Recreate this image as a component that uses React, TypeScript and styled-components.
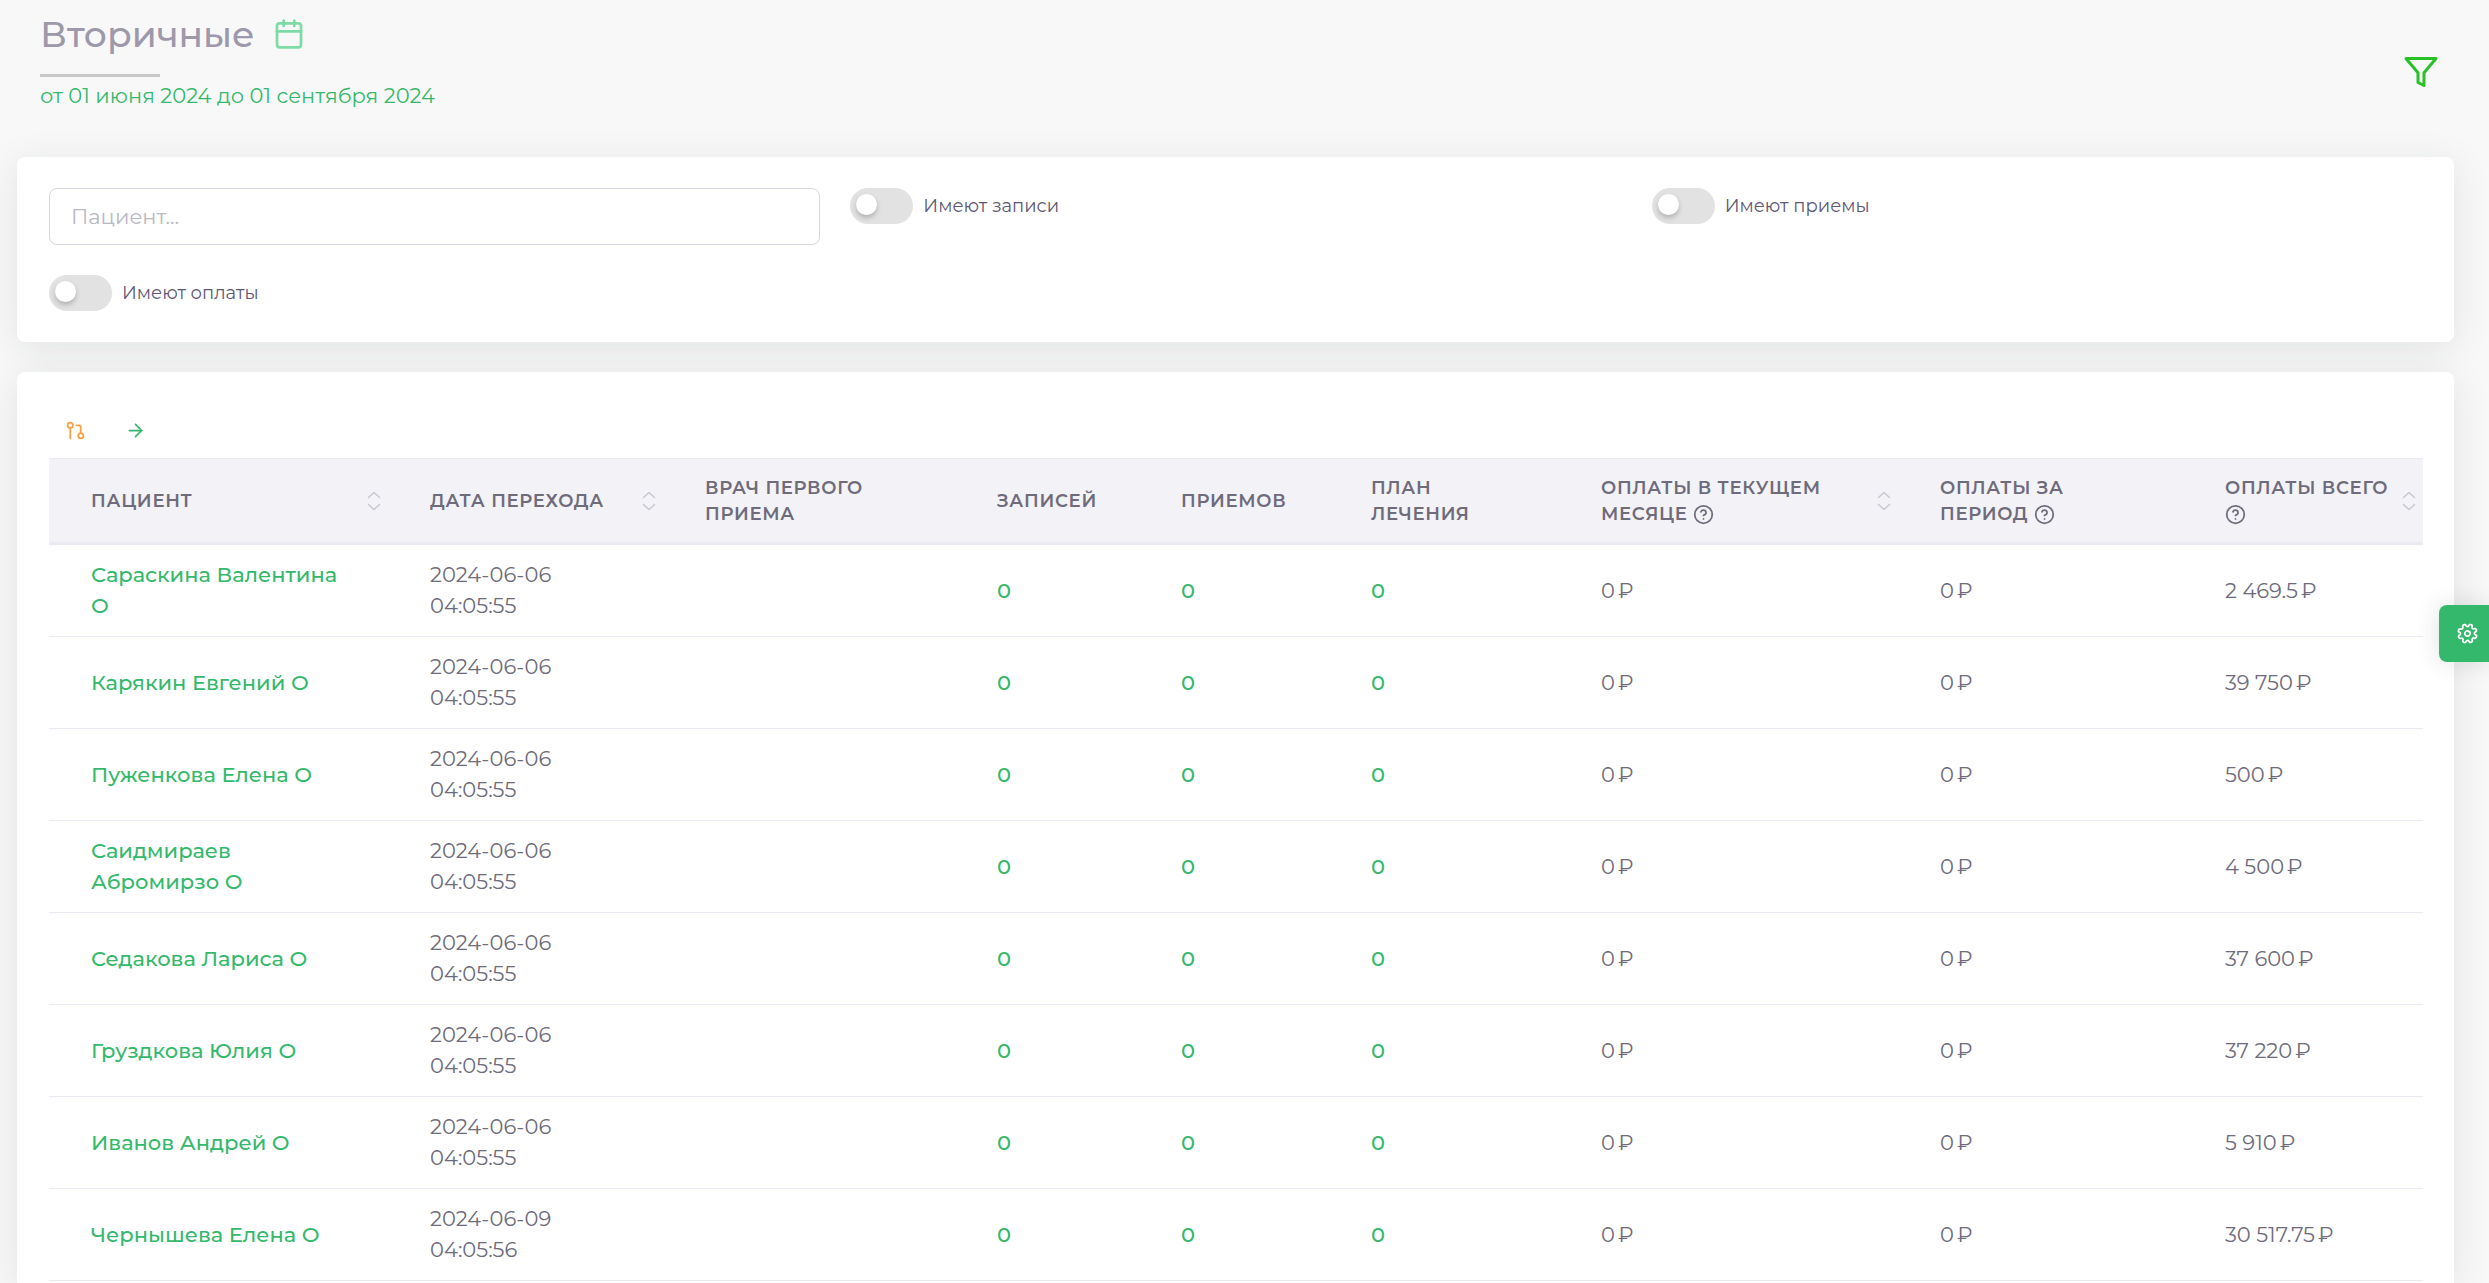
import React from "react";
import styled, { createGlobalStyle } from "styled-components";
import {
  FiArrowRight,
  FiCalendar,
  FiFilter,
  FiGitPullRequest,
  FiHelpCircle,
  FiSettings,
} from "react-icons/fi";

const color = {
  page: "#f8f8f8",
  text: "#6e6b7b",
  heading: "#9d99ab",
  label: "#5e5873",
  primary: "#34b96c",
  primaryLight: "#7ddca5",
  filter: "#28c128",
  warning: "#ff9f43",
  line: "#ebe9f1",
  headBg: "#f3f2f7",
  inputLine: "#d8d6de",
  muted: "#b9b9c3",
};

const GlobalStyle = createGlobalStyle`
  *, *::before, *::after { box-sizing: border-box; }
  body {
    margin: 0;
    background: ${color.page};
    color: ${color.text};
    font-family: Montserrat, Inter, "Noto Sans", sans-serif;
    font-size: 21px;
    line-height: 31px;
  }
  button, input { font: inherit; }
  a { color: inherit; text-decoration: none; }
`;

const Page = styled.div`
  display: flex;
  flex-direction: column;
  gap: 30px;
  min-height: 100vh;
  padding: 10px 35px 0 17px;
`;

const Header = styled.header`
  display: flex;
  justify-content: space-between;
  align-items: flex-end;
  padding: 0 15px 16px 23px;
`;

const TitleRow = styled.div`
  display: flex;
  align-items: center;
  gap: 18px;
`;

const Title = styled.h1`
  margin: 0;
  font-size: 36px;
  line-height: 48px;
  font-weight: 500;
  color: ${color.heading};
`;

const IconButton = styled.button<{ $color: string; $pad?: string }>`
  display: inline-flex;
  align-items: center;
  justify-content: center;
  padding: ${(p) => p.$pad ?? "0"};
  border: 0;
  background: none;
  color: ${(p) => p.$color};
  cursor: pointer;
`;

const TitleRule = styled.hr`
  width: 120px;
  height: 3px;
  margin: 16px 0 3px;
  border: 0;
  background: #c8c8c8;
`;

const Period = styled.p`
  margin: 0;
  color: ${color.primary};
`;

const Card = styled.section`
  padding: 31px 31px 31px 32px;
  border-radius: 8px;
  background: #fff;
  box-shadow: 0 6px 36px rgba(34, 41, 47, 0.1);
`;

const TableCard = styled(Card)`
  flex: 1;
  padding-bottom: 0;
  border-radius: 8px 8px 0 0;
`;

const Filters = styled.form`
  display: grid;
  grid-template-columns: repeat(3, 1fr);
  align-items: start;
  gap: 30px;
`;

const SearchInput = styled.input`
  width: 100%;
  height: 57px;
  padding: 0 21px;
  border: 1px solid ${color.inputLine};
  border-radius: 8px;
  background: #fff;
  color: ${color.text};
  &::placeholder {
    color: ${color.muted};
    opacity: 1;
  }
`;

const SwitchLabel = styled.label`
  display: flex;
  align-items: center;
  gap: 10px;
  font-size: 18px;
  color: ${color.label};
  cursor: pointer;
`;

const Switch = styled.input`
  appearance: none;
  display: flex;
  align-items: center;
  width: 63px;
  height: 36px;
  margin: 0;
  padding: 0 6px 3px;
  border-radius: 18px;
  background: #e2e2e2;
  cursor: pointer;
  &::before {
    content: "";
    width: 21px;
    height: 21px;
    border-radius: 50%;
    background: #fff;
    box-shadow: 0 3px 5px rgba(34, 41, 47, 0.25);
  }
  &:checked {
    justify-content: flex-end;
    background: ${color.primary};
  }
`;

const Toolbar = styled.div`
  display: flex;
  gap: 7px;
`;

const Table = styled.table`
  width: 100%;
  table-layout: fixed;
  border-collapse: separate;
  border-spacing: 0;
`;

const HeadCell = styled.th`
  position: relative;
  padding: 16px 24px 15px 42px;
  border-top: 1px solid ${color.line};
  border-bottom: 3px solid ${color.line};
  background: ${color.headBg};
  font-size: 18px;
  line-height: 26px;
  font-weight: 600;
  letter-spacing: 0.04em;
  text-align: left;
  text-transform: uppercase;
`;

const HelpIcon = styled(FiHelpCircle)`
  display: inline-block;
  vertical-align: -5px;
`;

const SortButton = styled.button`
  position: absolute;
  top: 50%;
  right: 7px;
  display: flex;
  padding: 0;
  border: 0;
  background: none;
  color: #c9c7d1;
  transform: translateY(-50%);
  cursor: pointer;
`;

const Cell = styled.td`
  padding: 14px 42px 15px;
  border-bottom: 1px solid ${color.line};
`;

const CellLink = styled.a`
  color: ${color.primary};
  font-weight: 500;
`;

const Currency = styled.span`
  margin-left: 3px;
`;

const SettingsButton = styled.button`
  position: fixed;
  top: calc(50% - 37px);
  right: 0;
  display: flex;
  align-items: center;
  justify-content: center;
  width: 50px;
  height: 57px;
  padding: 0 0 0 6px;
  border: 0;
  border-radius: 8px 0 0 8px;
  background: ${color.primary};
  color: #fff;
  box-shadow: 0 0 24px rgba(34, 41, 47, 0.14);
  cursor: pointer;
  svg {
    transform: rotate(22deg);
  }
`;

type Column = { lines: string[]; weight: number; sort?: boolean; help?: boolean };

const columns: Column[] = [
  { lines: ["Пациент"], weight: 339, sort: true },
  { lines: ["Дата перехода"], weight: 275, sort: true },
  { lines: ["Врач первого", "приема"], weight: 292 },
  { lines: ["Записей"], weight: 184 },
  { lines: ["Приемов"], weight: 190 },
  { lines: ["План", "лечения"], weight: 230 },
  { lines: ["Оплаты в текущем", "месяце"], weight: 339, sort: true, help: true },
  { lines: ["Оплаты за", "период"], weight: 285, help: true },
  { lines: ["Оплаты всего", ""], weight: 240, sort: true, help: true },
];

const totalWeight = columns.reduce((sum, c) => sum + c.weight, 0);

const patients = [
  { name: "Сараскина Валентина О", date: "2024-06-06", time: "04:05:55", total: "2 469.5" },
  { name: "Карякин Евгений О", date: "2024-06-06", time: "04:05:55", total: "39 750" },
  { name: "Пуженкова Елена О", date: "2024-06-06", time: "04:05:55", total: "500" },
  { name: "Саидмираев Абромирзо О", date: "2024-06-06", time: "04:05:55", total: "4 500" },
  { name: "Седакова Лариса О", date: "2024-06-06", time: "04:05:55", total: "37 600" },
  { name: "Груздкова Юлия О", date: "2024-06-06", time: "04:05:55", total: "37 220" },
  { name: "Иванов Андрей О", date: "2024-06-06", time: "04:05:55", total: "5 910" },
  { name: "Чернышева Елена О", date: "2024-06-09", time: "04:05:56", total: "30 517.75" },
];

const SortIcon = () => (
  <svg width="14" height="20" viewBox="0 0 14 20" fill="none" stroke="currentColor" strokeWidth="1.5" strokeLinecap="round" strokeLinejoin="round">
    <path d="M1.500 6.500 7 1.500l5.500 5M1.500 13.500l5.500 5 5.500-5" />
  </svg>
);

const Toggle = ({ id, label }: { id: string; label: string }) => (
  <SwitchLabel htmlFor={id}>
    <Switch id={id} type="checkbox" />
    {label}
  </SwitchLabel>
);

const Money = ({ amount }: { amount: string }) => (
  <>
    {amount}
    <Currency>₽</Currency>
  </>
);

export default function App() {
  return (
    <>
      <GlobalStyle />
      <Page>
        <Header>
          <div>
            <TitleRow>
              <Title>Вторичные</Title>
              <IconButton $color={color.primaryLight} aria-label="Выбрать период">
                <FiCalendar size={32} />
              </IconButton>
            </TitleRow>
            <TitleRule />
            <Period>от 01 июня 2024 до 01 сентября 2024</Period>
          </div>
          <IconButton $color={color.filter} $pad="21px 0" aria-label="Фильтр">
            <FiFilter size={36} />
          </IconButton>
        </Header>

        <Card>
          <Filters>
            <SearchInput type="text" placeholder="Пациент..." aria-label="Пациент" />
            <Toggle id="has-records" label="Имеют записи" />
            <Toggle id="has-visits" label="Имеют приемы" />
            <Toggle id="has-payments" label="Имеют оплаты" />
          </Filters>
        </Card>

        <TableCard>
          <Toolbar>
            <IconButton $color={color.warning} $pad="17px 16px" aria-label="Объединить">
              <FiGitPullRequest size={21} />
            </IconButton>
            <IconButton $color={color.primary} $pad="17px 16px" aria-label="Далее">
              <FiArrowRight size={21} />
            </IconButton>
          </Toolbar>
          <Table>
            <colgroup>
              {columns.map((c, i) => (
                <col key={i} style={{ width: `${(c.weight / totalWeight) * 100}%` }} />
              ))}
            </colgroup>
            <thead>
              <tr>
                {columns.map((c, i) => (
                  <HeadCell key={i} scope="col">
                    {c.lines.map((line, n) => (
                      <React.Fragment key={n}>
                        {n > 0 && <br />}
                        {line}
                      </React.Fragment>
                    ))}
                    {c.help && (
                      <>
                        {" "}
                        <HelpIcon size={21} />
                      </>
                    )}
                    {c.sort && (
                      <SortButton aria-label="Сортировать">
                        <SortIcon />
                      </SortButton>
                    )}
                  </HeadCell>
                ))}
              </tr>
            </thead>
            <tbody>
              {patients.map((p) => (
                <tr key={p.name}>
                  <Cell>
                    <CellLink href="#">{p.name}</CellLink>
                  </Cell>
                  <Cell>
                    {p.date} {p.time}
                  </Cell>
                  <Cell />
                  <Cell><CellLink href="#">0</CellLink></Cell>
                  <Cell><CellLink href="#">0</CellLink></Cell>
                  <Cell><CellLink href="#">0</CellLink></Cell>
                  <Cell><Money amount="0" /></Cell>
                  <Cell><Money amount="0" /></Cell>
                  <Cell><Money amount={p.total} /></Cell>
                </tr>
              ))}
            </tbody>
          </Table>
        </TableCard>
      </Page>
      <SettingsButton aria-label="Настройки">
        <FiSettings size={21} />
      </SettingsButton>
    </>
  );
}
